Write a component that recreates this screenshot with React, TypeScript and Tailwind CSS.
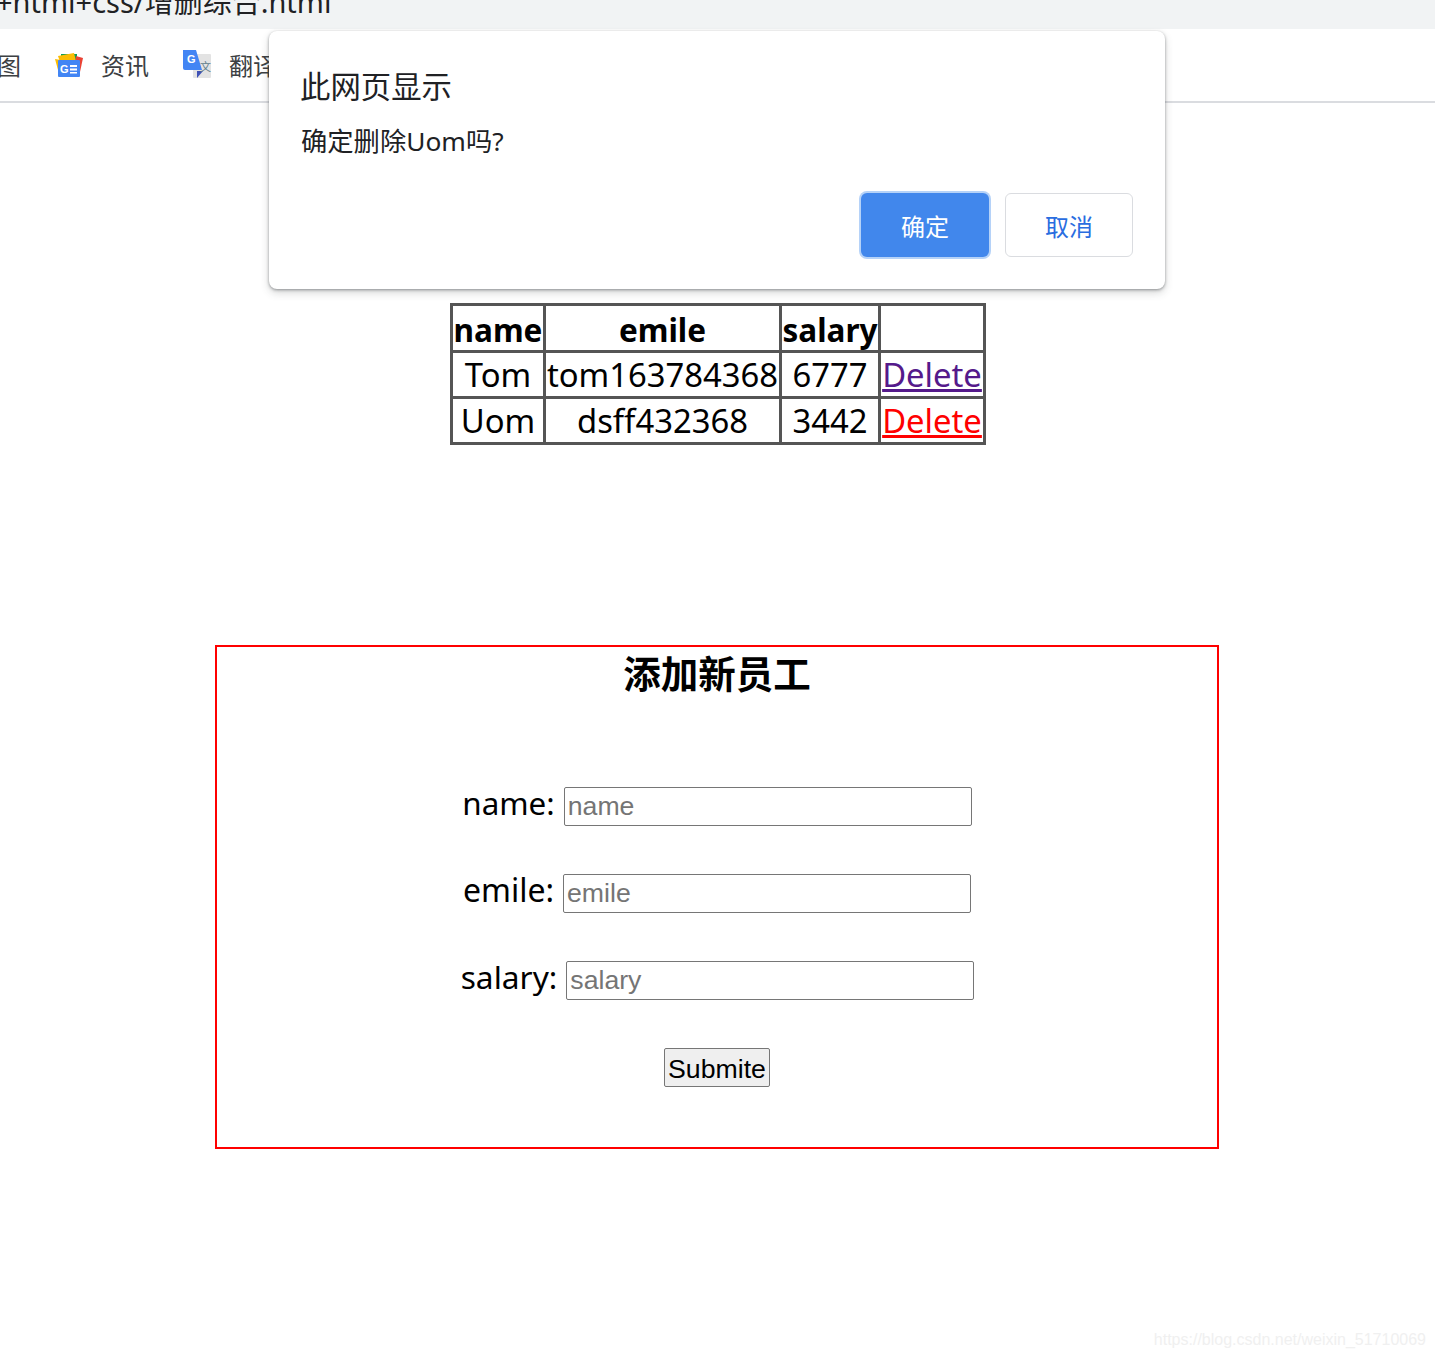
export default function App() {
  const cjk = '"Noto Sans","Noto Sans CJK SC",sans-serif';
  const td = "border-[3px] border-[#555] p-0 text-center";
  const th = "border-[3px] border-[#555] p-0 pt-[2px] text-center";
  const field = "h-[39px] w-[408px] rounded-[2px] border border-[#767676] px-[3px] text-[26.670px] placeholder:text-[#757575]";
  const row = "flex h-[39px] items-center justify-center gap-[9px]";
  const sans = { fontFamily: '"Liberation Sans",sans-serif' };
  return (
    <div className="relative h-[1358px] w-[1435px] overflow-hidden bg-white text-black" style={{ fontFamily: cjk }}>
      <div className="h-[29px] overflow-hidden bg-[#f1f3f4]">
        <div className="-ml-[4px] -mt-[16px] whitespace-nowrap text-[29px] leading-[36px] text-[#202124]">+html+css/增删综合.html</div>
      </div>
      <div className="flex h-[74px] items-center border-b-2 border-[#dadce0] text-[24px] text-[#3c4043]">
        <span className="-ml-[3px] mt-[2px] w-[24px] overflow-hidden">图</span>
        <svg className="ml-[33px]" width="30" height="28" viewBox="0 0 30 28">
          <path d="M7 3h16v8H7z" fill="#0f9d58" />
          <path d="M4 5l16-3 3 12H7z" fill="#fbbc04" />
          <path d="M22 5l7 2-3 14h-5z" fill="#ea4335" />
          <path d="M1 8l6 1v10H4z" fill="#fbbc04" />
          <rect x="4" y="9" width="22" height="17" rx="1" fill="#4285f4" />
          <text x="6" y="22" fontSize="11" fontWeight="700" fill="#fff" fontFamily="Liberation Sans">G</text>
          <path d="M16 14h7v2h-7zM16 17.500h7v2h-7zM16 21h7v1.500h-7z" fill="#fff" />
        </svg>
        <span className="ml-[17px] mt-[2px]">资讯</span>
        <svg className="ml-[32px] -mt-[3px]" width="32" height="32" viewBox="0 0 32 32">
          <rect x="12" y="6" width="18" height="24" rx="1" fill="#e3e3e3" />
          <path d="M2 2h13l6 20H4a2 2 0 0 1-2-2z" fill="#4285f4" />
          <path d="M16 23h6l-6 7z" fill="#3f51b5" />
          <text x="6" y="15" fontSize="11" fontWeight="700" fill="#fff" fontFamily="Liberation Sans">G</text>
          <text x="19" y="23" fontSize="11" fill="#607d8b" fontFamily="Noto Sans CJK SC">文</text>
        </svg>
        <span className="ml-[16px] mt-[2px]">翻译</span>
      </div>

      <table className="ml-[450px] mt-[200px] w-[536px] table-fixed border-collapse text-[32.800px] leading-[41px]">
        <colgroup>
          <col className="w-[93px]" />
          <col className="w-[236px]" />
          <col className="w-[99px]" />
          <col className="w-[105px]" />
        </colgroup>
        <tbody>
          <tr className="h-[47px] text-[31.500px] font-bold leading-[39px]">
            <td className={th}>name</td>
            <td className={th}>emile</td>
            <td className={th}>salary</td>
            <td className={td}></td>
          </tr>
          <tr className="h-[46px]">
            <td className={td}>Tom</td>
            <td className={`${td} whitespace-nowrap`}>tom163784368</td>
            <td className={td}>6777</td>
            <td className={td}><a href="#" className="text-[#551a8b] underline">Delete</a></td>
          </tr>
          <tr className="h-[46px]">
            <td className={td}>Uom</td>
            <td className={td}>dsff432368</td>
            <td className={td}>3442</td>
            <td className={td}><a href="#" className="text-[#ff0000] underline">Delete</a></td>
          </tr>
        </tbody>
      </table>

      <div className="ml-[215px] mt-[200px] h-[504px] w-[1004px] border-2 border-[#ff0000]">
        <h2 className="-mt-[1px] text-center text-[37.500px] font-bold leading-[56px]">添加新员工</h2>
        <div className={`mt-[85px] text-[31.400px] ${row}`}>
          <span className="mb-[8px]">name:</span>
          <input placeholder="name" className={field} style={sans} />
        </div>
        <div className={`mt-[48px] text-[32px] ${row}`}>
          <span className="mb-[8px]">emile:</span>
          <input placeholder="emile" className={field} style={sans} />
        </div>
        <div className={`mt-[48px] pl-[1px] text-[31.700px] ${row}`}>
          <span className="mb-[8px]">salary:</span>
          <input placeholder="salary" className={field} style={sans} />
        </div>
        <div className="mt-[48px] flex justify-center">
          <button className="h-[39px] w-[106px] rounded-[2px] border border-[#767676] bg-[#efefef] pb-[10px] text-[26.670px] text-black" style={sans}>Submite</button>
        </div>
      </div>

      <div className="absolute left-[269px] top-[31px] h-[258px] w-[896px] rounded-[8px] bg-white px-[32px] shadow-[0_1px_3px_rgba(60,64,67,0.5),0_4px_8px_rgba(60,64,67,0.2)]">
        <div className="-ml-[1px] pt-[34px] text-[30.400px] leading-[44px] text-[#202124]">此网页显示</div>
        <div className="mt-[14px] text-[26.300px] leading-[36px] text-[#202124]">确定删除Uom吗?</div>
        <div className="mt-[34px] flex justify-end gap-[16px]">
          <button className="h-[64px] w-[128px] rounded-[6px] bg-[#4187ec] pt-[3px] text-[24px] text-white shadow-[0_0_0_2px_#b5d2f8]">确定</button>
          <button className="h-[64px] w-[128px] rounded-[6px] border border-[#dadce0] bg-white pt-[3px] text-[24px] text-[#2a6de0]">取消</button>
        </div>
      </div>

      <div className="absolute right-[9px] top-[1330px] text-[16px] leading-[20px] text-[#f0f0f0]" style={sans}>https://blog.csdn.net/weixin_51710069</div>
    </div>
  );
}
